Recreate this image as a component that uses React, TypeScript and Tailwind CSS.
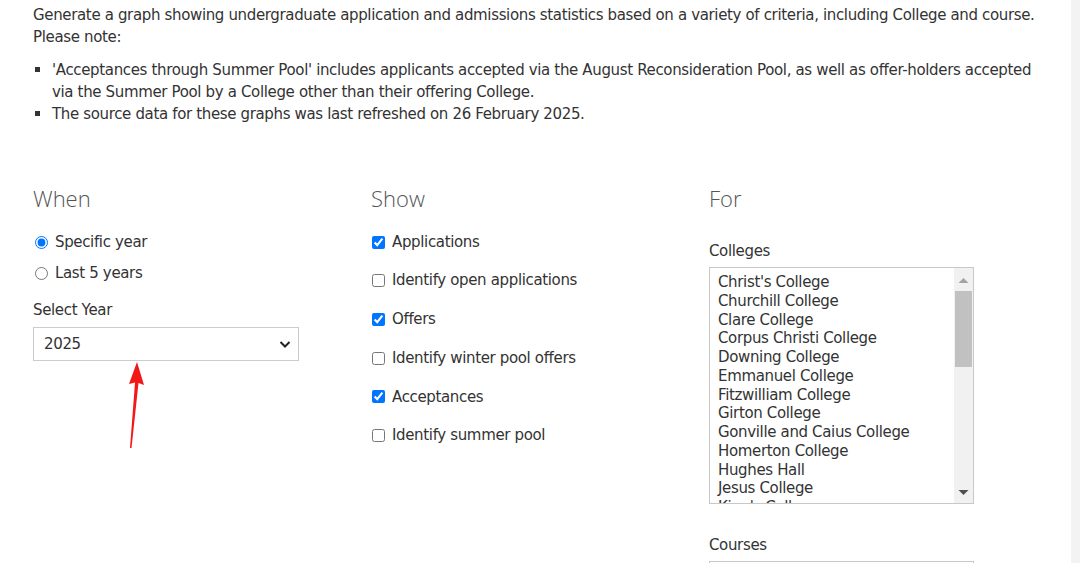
import React from "react";

const body = "font-['DejaVu_Sans',Verdana,sans-serif] tracking-[-0.35px]";
const heading = "font-['Open_Sans','Segoe_UI',sans-serif] font-light tracking-normal text-[22px] leading-[28px] text-[#555]";

const NOTES = [
  "'Acceptances through Summer Pool' includes applicants accepted via the August Reconsideration Pool, as well as offer-holders accepted via the Summer Pool by a College other than their offering College.",
  "The source data for these graphs was last refreshed on 26 February 2025.",
];

const SHOW = [
  { label: "Applications", checked: true },
  { label: "Identify open applications", checked: false },
  { label: "Offers", checked: true },
  { label: "Identify winter pool offers", checked: false },
  { label: "Acceptances", checked: true },
  { label: "Identify summer pool", checked: false },
];

const COLLEGES = [
  "Christ's College",
  "Churchill College",
  "Clare College",
  "Corpus Christi College",
  "Downing College",
  "Emmanuel College",
  "Fitzwilliam College",
  "Girton College",
  "Gonville and Caius College",
  "Homerton College",
  "Hughes Hall",
  "Jesus College",
  "King's College",
];

function ListBox() {
  return (
    <div className="flex w-[265px] h-[237px] border border-[#c8c8c8] bg-white">
      <div className="flex-1 overflow-hidden pl-[8px] pt-[5px] text-[15px] leading-[18.75px] text-[#333]">
        {COLLEGES.map((c) => (
          <div key={c} className="whitespace-nowrap">{c}</div>
        ))}
      </div>
      {/* scrollbar */}
      <div className="w-[19px] bg-[#f1f1f1] flex flex-col items-center">
        <svg width="19" height="17" viewBox="0 0 19 17" className="shrink-0">
          <polygon points="4.5,15 9.5,10 14.5,15" fill="#a3a3a3" />
        </svg>
        <div className="w-[17px] h-[76px] bg-[#c1c1c1] mt-[6px]" />
        <div className="flex-1" />
        <svg width="19" height="17" viewBox="0 0 19 17" className="shrink-0">
          <polygon points="4.5,4 14.5,4 9.5,9" fill="#505050" />
        </svg>
      </div>
    </div>
  );
}

export default function App() {
  return (
    <div className={`relative flex w-[1080px] h-[563px] overflow-hidden bg-white text-[#333] ${body}`}>
      <div className="flex-1 px-[33px] pt-[4px]">
        <p className="text-[15px] leading-[22px]">
          Generate a graph showing undergraduate application and admissions statistics based on a variety of criteria, including College and course.
          <br />
          Please note:
        </p>
        <ul className="mt-[11px] text-[15px] leading-[22px]">
          {NOTES.map((n) => (
            <li key={n} className="flex">
              <span className="w-[19px] shrink-0 flex pt-[8px] pl-[2px]">
                <span className="w-[5px] h-[5px] bg-[#333]" />
              </span>
              <span className="flex-1">{n}</span>
            </li>
          ))}
        </ul>

        <div className="grid grid-cols-[338px_338px_1fr] mt-[59px] text-[15px]">
          {/* When */}
          <div>
            <h2 className={heading}>When</h2>
            <div className="mt-[19px] flex flex-col gap-[9px]">
              <label className="flex items-center h-[22px]">
                <input type="radio" name="when" defaultChecked className="w-[13px] h-[13px] m-0 ml-[2px] mr-[7px]" />
                Specific year
              </label>
              <label className="flex items-center h-[22px]">
                <input type="radio" name="when" className="w-[13px] h-[13px] m-0 ml-[2px] mr-[7px]" />
                Last 5 years
              </label>
            </div>
            <div className="mt-[15px] leading-[22px]">Select Year</div>
            <div className="mt-[6px] w-[266px] h-[34px] border border-[#ccc] flex items-center justify-between pl-[10px] pr-[6px]">
              <span>2025</span>
              <svg width="14" height="14" viewBox="0 0 14 14">
                <path d="M2.5 5l4.5 4.5L11.5 5" fill="none" stroke="#222" strokeWidth="2" />
              </svg>
            </div>
          </div>

          {/* Show */}
          <div>
            <h2 className={heading}>Show</h2>
            <div className="mt-[19px] flex flex-col gap-[16.7px]">
              {SHOW.map((s) => (
                <label key={s.label} className="flex items-center h-[22px]">
                  <input type="checkbox" defaultChecked={s.checked} className="w-[13px] h-[13px] m-0 ml-[1px] mr-[7px]" />
                  {s.label}
                </label>
              ))}
            </div>
          </div>

          {/* For */}
          <div>
            <h2 className={heading}>For</h2>
            <div className="mt-[28px] leading-[22px]">Colleges</div>
            <div className="mt-[5px]">
              <ListBox />
            </div>
            <div className="mt-[30px] leading-[22px]">Courses</div>
            <div className="mt-[5px] w-[265px] h-[34px] border border-[#c8c8c8]" />
          </div>
        </div>
      </div>
      <div className="w-[9px] bg-[#f3f3f3]" />

      {/* red annotation arrow */}
      <svg className="absolute left-[120px] top-[355px]" width="30" height="100" viewBox="0 0 30 100">
        <polygon points="17,7 24,30 18.5,28 11.5,93 10,93 15,27.5 9,29" fill="#f21818" />
      </svg>
    </div>
  );
}
